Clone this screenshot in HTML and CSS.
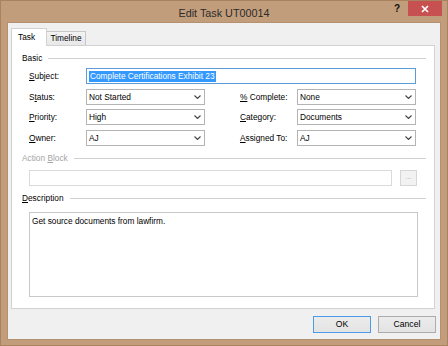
FILE: index.html
```html
<!DOCTYPE html>
<html lang="en">
<head>
  <meta charset="UTF-8">
  <title>Edit Task UT00014</title>
  <link rel="stylesheet" href="styles.css">
</head>
<body>

  <div class="window">

    <!-- Title bar -->
    <div class="titlebar">
      <div class="title">Edit Task UT00014</div>
      <div class="caption-buttons">
        <div class="help">?</div>
        <div class="close">
          <svg width="8" height="8" viewBox="0 0 8 8"><path d="M1 1L7 7M7 1L1 7" stroke="#fff" stroke-width="1.7" fill="none"/></svg>
        </div>
      </div>
    </div>

    <div class="client">
      <div class="tabs">
        <div class="tab active">Task</div>
        <div class="tab">Timeline</div>
      </div>

      <div class="panel">
        <div class="group-head"><span>Basic</span></div>

        <div class="basic-grid">
          <div class="label"><span><u>S</u>ubject:</span></div>
          <div class="textbox focused subject"><span class="sel">Complete Certifications Exhibit 23</span></div>

          <div class="label"><span>S<u>t</u>atus:</span></div>
          <div class="combo"><span>Not Started</span><svg width="7" height="4" viewBox="0 0 7 4"><path d="M0.5 0.5L3.5 3.5L6.5 0.5" stroke="#444" stroke-width="1.1" fill="none"/></svg></div>
          <div class="label right"><span><u>%</u> Complete:</span></div>
          <div class="combo"><span>None</span><svg width="7" height="4" viewBox="0 0 7 4"><path d="M0.5 0.5L3.5 3.5L6.5 0.5" stroke="#444" stroke-width="1.1" fill="none"/></svg></div>

          <div class="label"><span><u>P</u>riority:</span></div>
          <div class="combo"><span>High</span><svg width="7" height="4" viewBox="0 0 7 4"><path d="M0.5 0.5L3.5 3.5L6.5 0.5" stroke="#444" stroke-width="1.1" fill="none"/></svg></div>
          <div class="label right"><span><u>C</u>ategory:</span></div>
          <div class="combo"><span>Documents</span><svg width="7" height="4" viewBox="0 0 7 4"><path d="M0.5 0.5L3.5 3.5L6.5 0.5" stroke="#444" stroke-width="1.1" fill="none"/></svg></div>

          <div class="label"><span><u>O</u>wner:</span></div>
          <div class="combo"><span>AJ</span><svg width="7" height="4" viewBox="0 0 7 4"><path d="M0.5 0.5L3.5 3.5L6.5 0.5" stroke="#444" stroke-width="1.1" fill="none"/></svg></div>
          <div class="label right"><span><u>A</u>ssigned To:</span></div>
          <div class="combo"><span>AJ</span><svg width="7" height="4" viewBox="0 0 7 4"><path d="M0.5 0.5L3.5 3.5L6.5 0.5" stroke="#444" stroke-width="1.1" fill="none"/></svg></div>
        </div>

        <div class="group-head disabled action-head"><span>Action <u>B</u>lock</span></div>
        <div class="action-row">
          <div class="textbox disabled"></div>
          <div class="dots-btn">...</div>
        </div>

        <div class="group-head desc-head"><span><u>D</u>escription</span></div>
        <div class="textarea">Get source documents from lawfirm.</div>
      </div>

      <div class="buttons">
        <div class="btn default">OK</div>
        <div class="btn">Cancel</div>
      </div>
    </div>

  </div>

</body>
</html>
```

FILE: styles.css
```css
body {
  margin: 0;
  font-family: "Liberation Sans", Arial, sans-serif;
  font-size: 8.3px;
  color: #000;
}

.window {
  width: 448px;
  height: 346px;
  box-sizing: border-box;
  border: 1px solid #a9835f;
  background: #c29d7b;
  display: flex;
  flex-direction: column;
}

/* title bar */
.titlebar {
  height: 22px;
  display: grid;
  grid-template-columns: 1fr auto 1fr;
}

.title {
  grid-column: 2;
  align-self: center;
  font-size: 10.8px;
  color: #2b2b2b;
  padding-top: 1px;
}

.caption-buttons {
  grid-column: 3;
  justify-self: end;
  display: flex;
  margin-right: 5px;
}

.help {
  width: 22px;
  height: 15px;
  text-align: center;
  font-size: 10px;
  font-weight: bold;
  line-height: 15px;
  color: #111;
}

.close {
  width: 34px;
  height: 15px;
  background: #c75050;
  display: flex;
  align-items: center;
  justify-content: center;
}

/* client area */
.client {
  flex: 1;
  margin: 0 7px 6px 7px;
  background: #f0f0f0;
  box-shadow: 0 0 0 1px #b5916f;
  display: flex;
  flex-direction: column;
}

.tabs {
  height: 22px;
  box-sizing: border-box;
  padding: 5px 0 0 3px;
  display: flex;
  align-items: flex-end;
  position: relative;
  z-index: 1;
}

.tab {
  box-sizing: border-box;
  height: 14px;
  width: 39px;
  border: 1px solid #c8c8c8;
  border-bottom: none;
  border-left: none;
  background: linear-gradient(#f3f3f3, #e8e8e8);
  text-align: center;
  line-height: 13px;
}

.tab.active {
  width: 36px;
  height: 18px;
  margin-bottom: -1px;
  border-left: 1px solid #d2d2d2;
  border-color: #d2d2d2;
  background: #fff;
  text-align: left;
  padding-left: 6px;
  line-height: 16px;
}

.panel {
  flex: 1;
  background: #fff;
  border: 1px solid #d2d2d2;
  margin: 0 5px 0 3px;
  padding: 6px 8px 0 10px;
  display: flex;
  flex-direction: column;
}

.group-head {
  height: 11px;
  display: flex;
  align-items: center;
}

.group-head::after {
  content: "";
  flex: 1;
  height: 1px;
  background: #d0d0d0;
  margin-left: 6px;
  margin-top: 1px;
}

.group-head.disabled {
  color: #a3a3a3;
}

.basic-grid {
  margin: 5px 0 0 7px;
  display: grid;
  grid-template-columns: 57px 119px 92px 119px;
  grid-auto-rows: 16px;
  row-gap: 4.5px;
}

.basic-grid .subject {
  grid-column: 2 / 5;
}

.label {
  display: flex;
  align-items: center;
}

.label.right {
  padding-left: 35px;
}

.textbox {
  box-sizing: border-box;
  height: 16px;
  border: 1px solid #c4c4c4;
  background: #fff;
  display: flex;
  align-items: center;
  padding-left: 2px;
}

.textbox.focused {
  border-color: #5a9bd8;
}

.textbox.disabled {
  border-color: #dadada;
}

.sel {
  background: #3399ff;
  color: #fff;
  line-height: 11px;
  padding: 0 1px;
}

.combo {
  box-sizing: border-box;
  height: 16px;
  border: 1px solid #b4b4b4;
  background: #fff;
  display: flex;
  align-items: center;
  justify-content: space-between;
  padding: 0 3px 0 2px;
}

.action-head {
  margin-top: 6.5px;
}

.action-row {
  margin: 7px 0 0 7px;
  display: flex;
  gap: 8px;
}

.action-row .textbox {
  width: 363px;
}

.dots-btn {
  box-sizing: border-box;
  width: 17px;
  height: 16px;
  border: 1px solid #d6d6d6;
  background: #f2f2f2;
  color: #a8a8a8;
  text-align: center;
  line-height: 12px;
  font-size: 7px;
}

.desc-head {
  margin-top: 6px;
}

.textarea {
  box-sizing: border-box;
  margin: 9px 0 0 7px;
  width: 389px;
  height: 85px;
  border: 1px solid #c8c8c8;
  padding: 3px 2px;
}

/* dialog buttons */
.buttons {
  margin: 7px 0 6px 0;
  padding-right: 4px;
  display: flex;
  justify-content: flex-end;
  gap: 7px;
}

.btn {
  box-sizing: border-box;
  width: 58px;
  height: 17px;
  border: 1px solid #acacac;
  background: linear-gradient(#ececec, #e3e3e3);
  text-align: center;
  line-height: 15px;
  font-size: 8.6px;
}

.btn.default {
  border-color: #4c9be8;
}
```
